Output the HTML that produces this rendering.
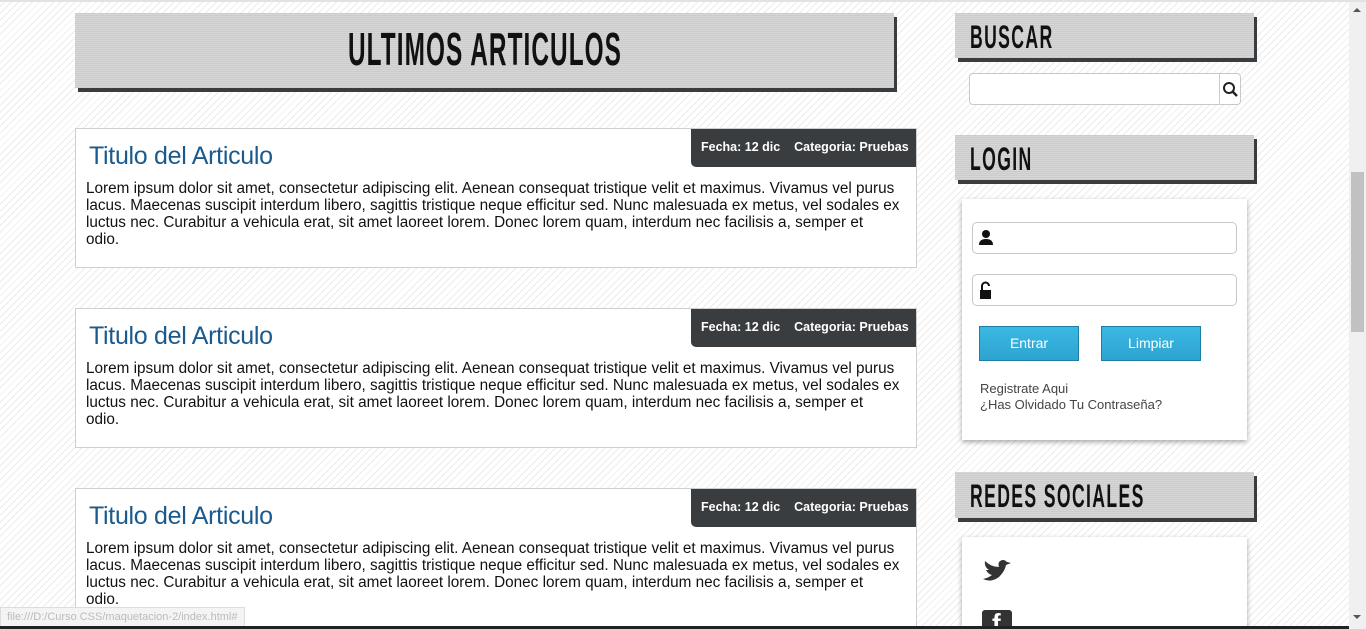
<!DOCTYPE html>
<html><head><meta charset="utf-8"><style>
*{margin:0;padding:0;box-sizing:border-box}
html,body{width:1366px;height:629px;overflow:hidden}
body{font-family:"Liberation Sans",sans-serif;position:relative;
background:#fff repeating-linear-gradient(135deg,#fff 0 4px,#ececec 4px 5px)}
.hd{position:absolute;background:#d6d6d6 repeating-linear-gradient(0deg,#ccc 0 1px,transparent 1px 2px);
box-shadow:3px 4px 0 #3a3d40;font-weight:bold;color:#111;white-space:nowrap}
.hd span{display:inline-block;transform:scaleX(.55);transform-origin:0 0;letter-spacing:2.5px}
.art{position:absolute;left:75px;width:842px;height:140px;background:#fff;border:1px solid #cfcfcf}
.art h2{position:absolute;left:13px;top:13px;font-size:25px;color:#1a5a8e;font-weight:normal;letter-spacing:-.3px}
.art p{position:absolute;left:10px;top:51px;font-size:15.3px;line-height:17px;color:#111;white-space:nowrap}
.meta{position:absolute;right:0;top:0;width:225px;height:38px;background:#3a3d40;border-radius:0 0 0 5px;color:#fff;font-size:12.5px;font-weight:bold;padding:11px 0 0 10px;white-space:pre}
.panel{position:absolute;left:962px;width:285px;background:#fff;box-shadow:0 2px 5px rgba(0,0,0,.35)}
.inp{position:absolute;left:972px;width:265px;height:32px;border:1px solid #c8c8c8;border-radius:5px;background:#fff}
.btn{position:absolute;top:326px;width:100px;height:35px;background:linear-gradient(#3ab8e3,#2ea3d0);border:1px solid #1f7ea5;color:#fff;font-size:14px;text-align:center;line-height:33px}
</style></head><body>
<div style="position:absolute;left:0;top:0;width:1366px;height:2px;background:#e2e2e2"></div>
<div class="hd" style="left:75px;top:13px;width:819px;height:75px"><span style="position:absolute;left:273px;top:11px;font-size:46px;line-height:50px;letter-spacing:2px;transform:scaleX(.53)">ULTIMOS ARTICULOS</span></div>

<div class="art" style="top:128px"><h2>Titulo del Articulo</h2><div class="meta">Fecha: 12 dic    Categoria: Pruebas</div>
<p>Lorem ipsum dolor sit amet, consectetur adipiscing elit. Aenean consequat tristique velit et maximus. Vivamus vel purus<br>lacus. Maecenas suscipit interdum libero, sagittis tristique neque efficitur sed. Nunc malesuada ex metus, vel sodales ex<br>luctus nec. Curabitur a vehicula erat, sit amet laoreet lorem. Donec lorem quam, interdum nec facilisis a, semper et<br>odio.</p></div>
<div class="art" style="top:308px"><h2>Titulo del Articulo</h2><div class="meta">Fecha: 12 dic    Categoria: Pruebas</div>
<p>Lorem ipsum dolor sit amet, consectetur adipiscing elit. Aenean consequat tristique velit et maximus. Vivamus vel purus<br>lacus. Maecenas suscipit interdum libero, sagittis tristique neque efficitur sed. Nunc malesuada ex metus, vel sodales ex<br>luctus nec. Curabitur a vehicula erat, sit amet laoreet lorem. Donec lorem quam, interdum nec facilisis a, semper et<br>odio.</p></div>
<div class="art" style="top:488px"><h2>Titulo del Articulo</h2><div class="meta">Fecha: 12 dic    Categoria: Pruebas</div>
<p>Lorem ipsum dolor sit amet, consectetur adipiscing elit. Aenean consequat tristique velit et maximus. Vivamus vel purus<br>lacus. Maecenas suscipit interdum libero, sagittis tristique neque efficitur sed. Nunc malesuada ex metus, vel sodales ex<br>luctus nec. Curabitur a vehicula erat, sit amet laoreet lorem. Donec lorem quam, interdum nec facilisis a, semper et<br>odio.</p></div>

<div class="hd" style="left:955px;top:13px;width:299px;height:45px"><span style="position:absolute;left:15px;top:7px;font-size:32px;line-height:34px">BUSCAR</span></div>
<div style="position:absolute;left:969px;top:73px;width:272px;height:32px;border:1px solid #c8c8c8;border-radius:4px;background:#fff">
<div style="position:absolute;right:0;top:0;width:21px;height:30px;border-left:1px solid #ccc"><svg width="21" height="30"><circle cx="9" cy="14" r="5" fill="none" stroke="#222" stroke-width="2"/><path d="M12.5 17.5 17 22" stroke="#222" stroke-width="2.5"/></svg></div></div>

<div class="hd" style="left:955px;top:135px;width:299px;height:45px"><span style="position:absolute;left:15px;top:7px;font-size:32px;line-height:34px">LOGIN</span></div>
<div class="panel" style="top:199px;height:241px"></div>
<div class="inp" style="top:222px"><svg width="20" height="30" style="position:absolute;left:4px;top:0"><circle cx="9" cy="11" r="4" fill="#111"/><path d="M2 22 Q2 16 9 16 Q16 16 16 22Z" fill="#111"/></svg></div>
<div class="inp" style="top:274px"><svg width="20" height="30" style="position:absolute;left:4px;top:0"><path d="M5 15 V11 a3.5 3.5 0 0 1 7 0" fill="none" stroke="#111" stroke-width="2"/><rect x="3" y="15" width="11" height="9" fill="#111"/></svg></div>
<div class="btn" style="left:979px">Entrar</div>
<div class="btn" style="left:1101px">Limpiar</div>
<div style="position:absolute;left:980px;top:381px;font-size:13px;line-height:16px;color:#444">Registrate Aqui<br>¿Has Olvidado Tu Contraseña?</div>

<div class="hd" style="left:955px;top:472px;width:299px;height:46px"><span style="position:absolute;left:15px;top:7px;font-size:32px;line-height:34px">REDES SOCIALES</span></div>
<div class="panel" style="top:537px;height:100px"></div>
<svg width="32" height="26" style="position:absolute;left:981px;top:559px"><path d="M2 20 Q10 24 18 18 Q24 12 25 6 L30 4 L26 3 Q22 -1 18 3 Q17 6 18 8 Q10 8 4 2 Q3 8 8 11 L5 11 Q7 15 11 16 Q7 19 2 20Z" fill="#333"/></svg>
<div style="position:absolute;left:982px;top:610px;width:30px;height:19px;background:#333;border-radius:3px 3px 0 0;overflow:hidden"><span style="position:absolute;left:10px;top:-2px;color:#fff;font-weight:bold;font-size:26px">f</span></div>

<div style="position:absolute;left:1349px;top:2px;width:17px;height:627px;background:#f0f0f0"></div>
<div style="position:absolute;left:1351px;top:172px;width:13px;height:160px;background:#c1c1c1"></div>
<div style="position:absolute;left:1353px;top:8px;border:4px solid transparent;border-bottom:4px solid #555;border-top:0"></div>
<div style="position:absolute;left:1353px;top:615px;border:4px solid transparent;border-top:4px solid #555;border-bottom:0"></div>
<div style="position:absolute;left:0;top:607px;height:20px;padding:3px 6px;background:#f4f4f4;color:#bbb;font-size:11px;border:1px solid #ddd">file:///D:/Curso CSS/maquetacion-2/index.html#</div>
<div style="position:absolute;left:0;top:626px;width:1349px;height:3px;background:#222"></div>
</body></html>
